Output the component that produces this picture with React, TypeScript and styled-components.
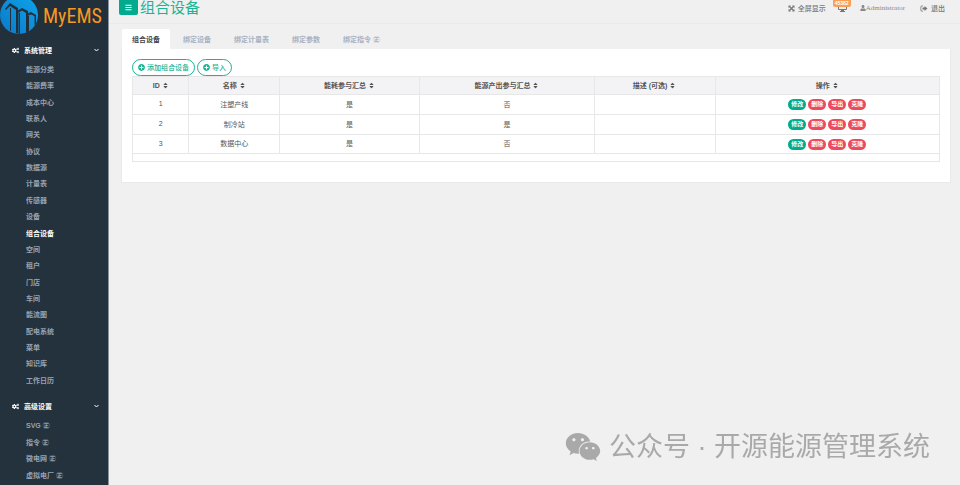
import React from "react";
import styled, { createGlobalStyle } from "styled-components";
import { FaCogs, FaPlusCircle, FaBars, FaSort, FaUser, FaWeixin } from "react-icons/fa";

const sans = `"Liberation Sans", "Noto Sans CJK SC", sans-serif`;

const GlobalStyle = createGlobalStyle`
  * { box-sizing: border-box; }
  body { margin: 0; background: #f0f0f0; font-family: ${sans}; font-size: 7px; color: #555; }
  button { font-family: inherit; cursor: pointer; }
  a { text-decoration: none; color: inherit; }
`;

const Page = styled.div`
  display: flex;
  height: 100vh;
  overflow: hidden;
`;

const Sidebar = styled.nav`
  flex: 0 0 109px;
  overflow: hidden;
  background: #24323e;
  border-right: 1px solid #8a939b;
`;

const Brand = styled.a`
  display: flex;
  align-items: flex-start;
  gap: 4px;
  height: 40px;
  background: #22303c;
`;

const BrandName = styled.span`
  color: #f8981d;
  font-family: "Liberation Sans Narrow", "Roboto Condensed", Roboto, sans-serif;
  font-size: 20px;
  line-height: 32px;
`;

const Group = styled.section`
  padding-bottom: 7px;
`;

const GroupHead = styled.button`
  display: flex;
  align-items: center;
  gap: 5px;
  width: 100%;
  height: 20px;
  padding: 0 9px 0 12px;
  border: 0;
  background: none;
  color: #fff;
  font-size: 7px;
  font-weight: 700;
  svg:last-child { margin-left: auto; }
`;

const Menu = styled.ul<{ $height: number }>`
  display: grid;
  grid-auto-rows: 1fr;
  min-height: ${(p) => p.$height}px;
  list-style: none;
  margin: 0;
  padding: 2px 0 0;
`;

const MenuItem = styled.li<{ $active?: boolean }>`
  padding-left: 26px;
  line-height: 16px;
  font-weight: 600;
  color: ${(p) => (p.$active ? "#fff" : "#98a3b3")};
`;

const Main = styled.main`
  flex: 1;
  min-width: 0;
`;

const TopBar = styled.header`
  display: flex;
  justify-content: space-between;
  height: 24px;
  border-bottom: 1px solid #e7eaec;
`;

const TitleArea = styled.div`
  display: flex;
  align-items: flex-start;
  gap: 2px;
  padding-left: 10px;
`;

const Toggle = styled.button`
  display: grid;
  place-items: center;
  width: 19px;
  height: 15px;
  padding: 0;
  border: 0;
  border-radius: 0 0 2px 2px;
  background: #00ab8e;
  color: #fff;
`;

const Title = styled.h1`
  margin: 0;
  color: #1ab394;
  font-size: 15px;
  font-weight: 400;
  line-height: 16px;
`;

const Tools = styled.div`
  display: flex;
  align-items: center;
  gap: 15px;
  height: 16px;
  padding-right: 15px;
  color: #777;
`;

const Tool = styled.a<{ $serif?: boolean }>`
  display: flex;
  align-items: center;
  gap: ${(p) => (p.$serif ? "0" : "3px")};
  color: ${(p) => (p.$serif ? "#888" : "inherit")};
  font-family: ${(p) => (p.$serif ? `"Liberation Serif", serif` : "inherit")};
  font-size: 7px;
  font-weight: 500;
`;

const Alerts = styled.a`
  position: relative;
  display: block;
  width: 9px;
  height: 8px;
  margin: 0 -2px 0 -3px;
  svg { display: block; }
`;

const Badge = styled.span`
  position: absolute;
  left: -5px;
  top: -5px;
  padding: 0 2px;
  border-radius: 0 0 2px 2px;
  background: #f8a05a;
  color: #fff;
  font-size: 5px;
  font-weight: 700;
  line-height: 8px;
`;

const Content = styled.div`
  padding: 5px 9px 0 12px;
`;

const Tabs = styled.div`
  display: flex;
  gap: 3px;
  padding-left: 1px;
`;

const Tab = styled.button<{ $active?: boolean }>`
  height: 20px;
  padding: 0 10px;
  border: 0;
  border-radius: 2px 2px 0 0;
  background: ${(p) => (p.$active ? "#fff" : "transparent")};
  color: ${(p) => (p.$active ? "#444" : "#a7b1c2")};
  font-size: 7px;
  font-weight: 700;
`;

const Panel = styled.section`
  padding: 10px 10px 20px;
  border: 1px solid #e7eaec;
  border-top: 0;
  background: #fff;
`;

const Actions = styled.div`
  display: flex;
  gap: 2px;
`;

const OutlineButton = styled.button`
  display: flex;
  align-items: center;
  gap: 2px;
  height: 17px;
  padding: 0 5px 1px;
  border: 1px solid #1ab394;
  border-radius: 9px;
  background: #fff;
  color: #1ab394;
  font-size: 7px;
  font-weight: 500;
`;

const Grid = styled.table`
  width: 100%;
  table-layout: fixed;
  border-collapse: collapse;
  text-align: center;
  th, td { padding: 0; border: 1px solid #e7e7e7; }
  th { height: 18px; padding-bottom: 1px; background: #f3f3f5; color: #555; font-weight: 700; }
  th svg { margin-left: 2px; vertical-align: -1px; }
  tbody td { height: 20px; padding-bottom: 2px; }
  tbody td:last-child { padding-bottom: 0; }
  tbody tr:last-child td { height: 19px; }
  tfoot td { height: 8px; }
`;

const Pill = styled.button<{ $primary?: boolean }>`
  height: 11px;
  margin: 0 1px;
  padding: 0 3px;
  border: 0;
  border-radius: 6px;
  background: ${(p) => (p.$primary ? "#00ab8e" : "#ed4a5e")};
  color: #fff;
  font-size: 6px;
  font-weight: 600;
  line-height: 11px;
  vertical-align: middle;
`;

const Watermark = styled.aside`
  position: fixed;
  right: 30px;
  bottom: 20px;
  display: flex;
  align-items: center;
  gap: 8px;
  color: #a9a9a9;
  font-family: "Liberation Sans", "Noto Sans CJK SC", sans-serif;
  font-size: 27px;
  line-height: 36px;
`;

const system = ["能源分类", "能源费率", "成本中心", "联系人", "网关", "协议", "数据源", "计量表", "传感器", "设备", "组合设备", "空间", "租户", "门店", "车间", "能流图", "配电系统", "菜单", "知识库", "工作日历"];
const advanced = ["SVG ㊣", "指令 ㊣", "微电网 ㊣", "虚拟电厂 ㊣"];
const tabs = ["组合设备", "绑定设备", "绑定计量表", "绑定参数", "绑定指令 ㊣"];
const columns: [string, string][] = [["ID", "7%"], ["名称", "11.2%"], ["能耗参与汇总", "17.4%"], ["能源产出参与汇总", "21.6%"], ["描述 (可选)", "15%"], ["操作", "27.8%"]];
const rows = [["1", "注塑产线", "是", "否", ""], ["2", "制冷站", "是", "是", ""], ["3", "数据中心", "是", "否", ""]];

const Logo = () => (
  <svg width="39" height="36" viewBox="0 0 39 36" aria-hidden="true">
    <defs>
      <linearGradient id="globe" x1="0" y1="1" x2="1" y2="0">
        <stop offset="0" stopColor="#0a78c8" />
        <stop offset="1" stopColor="#0fa4ea" />
      </linearGradient>
    </defs>
    <circle cx="19" cy="15" r="19" fill="url(#globe)" />
    <g fill="#22303c">
      <path d="M5 9 10 3 18 8V33.500L16 33V10L10 6 6 10Z" />
      <path d="M10 8h1V31L10 30.500Z" />
      <path d="M17 11 22 8 28 11V32L26 32.700V13L22 10.500 18 13Z" />
      <path d="M18.500 13H20V33.900H18.500Z" />
      <path d="M26 14 31 12 36 15V23L34.500 26V16L31 14.500 27 16Z" />
      <path d="M28 16h1V31.500L28 32Z" />
    </g>
  </svg>
);

const Chevron = () => (
  <svg width="5" height="4" viewBox="0 0 5 4" fill="none" stroke="currentColor" aria-hidden="true">
    <path d="M0.500 1 2.500 3 4.500 1" />
  </svg>
);

const ExpandIcon = () => (
  <svg width="7" height="7" viewBox="0 0 14 14" fill="currentColor" aria-hidden="true">
    <path d="M1 1H6L4.400 2.600 7 5.200 9.600 2.600 8 1H13V6L11.400 4.400 8.800 7 11.400 9.600 13 8V13H8L9.600 11.400 7 8.800 4.400 11.400 6 13H1V8L2.600 9.600 5.200 7 2.600 4.400 1 6Z" />
  </svg>
);

const MonitorIcon = () => (
  <svg width="9" height="8" viewBox="0 0 9 8" fill="currentColor" aria-hidden="true">
    <path d="M1 0H8Q9 0 9 1V5Q9 6 8 6H6V7H7V8H2V7H3V6H1Q0 6 0 5V1Q0 0 1 0ZM1 1V5H8V1Z" fillRule="evenodd" />
  </svg>
);

const LogoutIcon = () => (
  <svg width="8" height="7" viewBox="0 0 16 14" fill="currentColor" aria-hidden="true">
    <path d="M6 1H4Q1 1 1 4V10Q1 13 4 13H6V11.500H4Q2.500 11.500 2.500 10V4Q2.500 2.500 4 2.500H6Z" />
    <path d="M9 2 15 7 9 12V9H5V5H9Z" />
  </svg>
);

const MenuGroup = ({ title, items, height }: { title: string; items: string[]; height: number }) => (
  <Group>
    <GroupHead>
      <FaCogs size={7} />
      {title}
      <Chevron />
    </GroupHead>
    <Menu $height={height}>
      {items.map((item) => (
        <MenuItem key={item} $active={item === "组合设备"}><a href="#">{item}</a></MenuItem>
      ))}
    </Menu>
  </Group>
);

export default function App() {
  return (
    <Page>
      <GlobalStyle />
      <Sidebar>
        <Brand href="#">
          <Logo />
          <BrandName>MyEMS</BrandName>
        </Brand>
        <MenuGroup title="系统管理" items={system} height={329} />
        <MenuGroup title="高级设置" items={advanced} height={68} />
      </Sidebar>
      <Main>
        <TopBar>
          <TitleArea>
            <Toggle aria-label="菜单"><FaBars size={7} /></Toggle>
            <Title>组合设备</Title>
          </TitleArea>
          <Tools>
            <Tool href="#"><ExpandIcon />全屏显示</Tool>
            <Alerts href="#"><MonitorIcon /><Badge>45382</Badge></Alerts>
            <Tool href="#" $serif><FaUser size={6} />Administrator</Tool>
            <Tool href="#"><LogoutIcon />退出</Tool>
          </Tools>
        </TopBar>
        <Content>
          <Tabs role="tablist">
            {tabs.map((t, i) => <Tab key={t} role="tab" aria-selected={i === 0} $active={i === 0}>{t}</Tab>)}
          </Tabs>
          <Panel>
            <Actions>
              <OutlineButton><FaPlusCircle size={7} />添加组合设备</OutlineButton>
              <OutlineButton><FaPlusCircle size={7} />导入</OutlineButton>
            </Actions>
            <Grid>
              <colgroup>{columns.map(([c, w]) => <col key={c} width={w} />)}</colgroup>
              <thead><tr>{columns.map(([c]) => <th key={c}>{c}<FaSort size={7} /></th>)}</tr></thead>
              <tbody>
                {rows.map((r) => (
                  <tr key={r[0]}>
                    {r.map((v, i) => <td key={i}>{v}</td>)}
                    <td><Pill $primary>修改</Pill><Pill>删除</Pill><Pill>导出</Pill><Pill>克隆</Pill></td>
                  </tr>
                ))}
              </tbody>
              <tfoot><tr><td colSpan={6} /></tr></tfoot>
            </Grid>
          </Panel>
        </Content>
      </Main>
      <Watermark><FaWeixin size={36} />公众号 · 开源能源管理系统</Watermark>
    </Page>
  );
}
